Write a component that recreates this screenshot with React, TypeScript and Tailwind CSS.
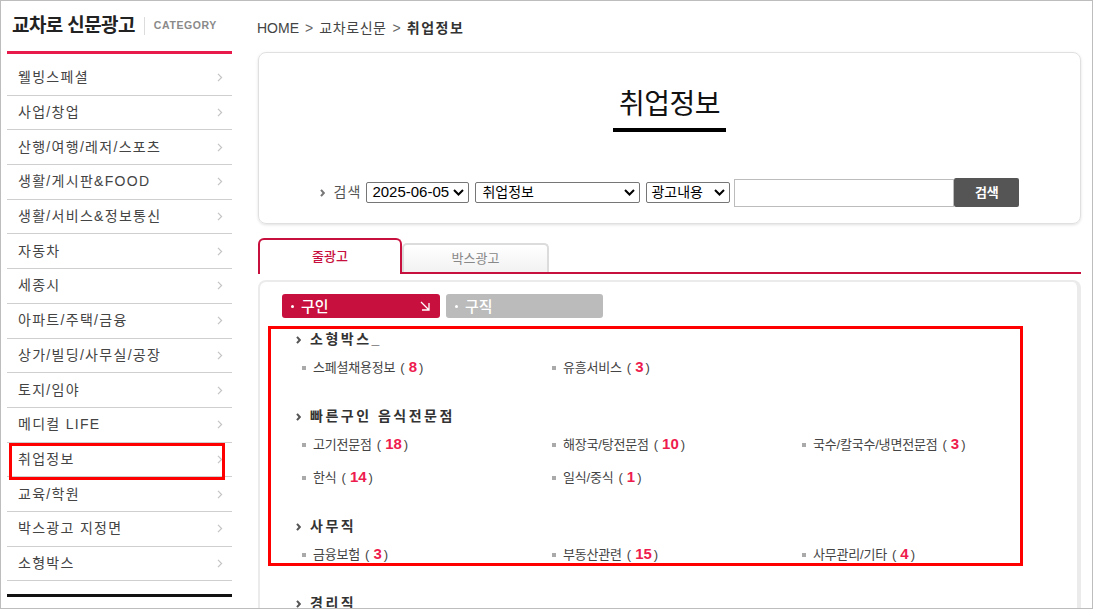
import React from "react";

const menu = [
  "웰빙스페셜",
  "사업/창업",
  "산행/여행/레저/스포츠",
  "생활/게시판&FOOD",
  "생활/서비스&정보통신",
  "자동차",
  "세종시",
  "아파트/주택/금융",
  "상가/빌딩/사무실/공장",
  "토지/임야",
  "메디컬 LIFE",
  "취업정보",
  "교육/학원",
  "박스광고 지정면",
  "소형박스",
];

const sections: { title: string; items: [string, number][] }[] = [
  { title: "소형박스_", items: [["스페셜채용정보", 8], ["유흥서비스", 3]] },
  {
    title: "빠른구인 음식전문점",
    items: [
      ["고기전문점", 18],
      ["해장국/탕전문점", 10],
      ["국수/칼국수/냉면전문점", 3],
      ["한식", 14],
      ["일식/중식", 1],
    ],
  },
  { title: "사무직", items: [["금융보험", 3], ["부동산관련", 15], ["사무관리/기타", 4]] },
  { title: "경리직", items: [] },
];

function SmallChev({ color = "#c4c4c4" }: { color?: string }) {
  return (
    <svg width="6" height="9" viewBox="0 0 6 9">
      <path d="M1 0.8 L4.6 4.5 L1 8.2" stroke={color} strokeWidth="1.2" fill="none" />
    </svg>
  );
}

function BoldChev({ color = "#666" }: { color?: string }) {
  return (
    <svg width="5" height="8" viewBox="0 0 5 8">
      <path d="M1 0.8 L3.8 4 L1 7.2" stroke={color} strokeWidth="2" fill="none" />
    </svg>
  );
}

function SelectChev() {
  return (
    <svg width="11" height="7" viewBox="0 0 11 7">
      <path d="M1 1 L5.5 5.5 L10 1" stroke="#000" strokeWidth="2" fill="none" />
    </svg>
  );
}

export default function App() {
  return (
    <div className="w-[1093px] h-[609px] border border-[#bdbdbd] overflow-hidden flex bg-white font-['Liberation_Sans','Noto_Sans_CJK_KR',sans-serif]">
      {/* Sidebar */}
      <aside className="ml-[6px] w-[225px] shrink-0 relative">
        <div className="h-[50px] flex items-center pl-[5px]">
          <span className="text-[19px] font-bold text-[#222] tracking-[-0.6px]">교차로 신문광고</span>
          <span className="ml-[9px] w-px h-[18px] bg-[#dcdcdc]" />
          <span className="ml-[9px] text-[10.5px] font-bold tracking-[0.6px] text-[#8a8a8a]">CATEGORY</span>
        </div>
        <div className="h-[3px] bg-[#e8194b]" />
        <ul className="mt-[7px]">
          {menu.map((m) => (
            <li
              key={m}
              className="h-[34.7px] border-b border-[#cfcfcf] flex items-center justify-between pl-[11px] pr-[9px] text-[14px] text-[#444] tracking-[1.3px]"
            >
              <span>{m}</span>
              <SmallChev />
            </li>
          ))}
        </ul>
        <div className="mt-[13px] h-[3px] bg-[#111]" />
        <div className="absolute left-[2px] top-[442px] w-[216px] h-[37px] border-[3px] border-[#ff0000]" />
      </aside>

      {/* Main */}
      <main className="ml-[26px] w-[823px] shrink-0 flex flex-col">
        <div className="mt-[17px] h-[20px] flex items-center text-[14px] text-[#444] -ml-px">
          <span>HOME</span>
          <span className="mx-[6px] text-[#666]">&gt;</span>
          <span className="tracking-[0.6px]">교차로신문</span>
          <span className="mx-[6px] text-[#666]">&gt;</span>
          <span className="font-bold text-[#333] tracking-[1.5px]">취업정보</span>
        </div>

        {/* Search panel */}
        <section className="mt-[14px] h-[172px] shrink-0 border border-[#e0e0e0] rounded-[8px] shadow-[0_1px_3px_rgba(0,0,0,0.12)] flex flex-col items-center">
          <h1 className="mt-[35px] text-[28px] leading-[34px] text-[#111] tracking-[-0.5px]">취업정보</h1>
          <div className="mt-[6px] w-[113px] h-[4px] bg-black" />
          <div className="mt-[46px] h-[29px] flex items-center">
            <BoldChev color="#777" />
            <span className="ml-[9px] text-[14px] text-[#555] tracking-[1px]">검색</span>
            <div className="ml-[5px] w-[103px] h-[21px] border border-[#767676] rounded-[2px] flex items-center justify-between pl-[5px] pr-[4px] text-[15px] text-black">
              <span>2025-06-05</span>
              <SelectChev />
            </div>
            <div className="ml-[6px] w-[165px] h-[21px] border border-[#767676] rounded-[2px] flex items-center justify-between pl-[6px] pr-[4px] text-[14px] text-black">
              <span>취업정보</span>
              <SelectChev />
            </div>
            <div className="ml-[6px] w-[84px] h-[21px] border border-[#767676] rounded-[2px] flex items-center justify-between pl-[4px] pr-[4px] text-[14px] text-black">
              <span>광고내용</span>
              <SelectChev />
            </div>
            <div className="ml-[4px] w-[220px] h-[28px] border border-[#bcbcbc] bg-white" />
            <button className="w-[65px] h-[29px] bg-[#555] text-white font-bold text-[13px] rounded-[2px]">검색</button>
          </div>
        </section>

        {/* Tabs */}
        <div className="mt-[14px] h-[36px] shrink-0 flex items-end">
          <div className="w-[144px] h-[36px] border-2 border-b-0 border-[#c8103e] rounded-t-[6px] bg-white flex items-center justify-center text-[13px] text-[#c8103e] font-medium">
            줄광고
          </div>
          <div className="flex-1 h-[31px] border-b-2 border-[#c8103e] flex items-end">
            <div className="w-[147px] h-[29px] border-2 border-b-0 border-[#dcdcdc] rounded-t-[5px] bg-gradient-to-b from-white to-[#f2f2f2] flex items-center justify-center text-[13px] text-[#888]">
              박스광고
            </div>
          </div>
        </div>

        {/* Content panel */}
        <div className="mt-[6px] flex-1 border-2 border-r-4 border-b-0 border-[#ebebeb] rounded-t-[8px] pl-[22px] pt-[12px] relative">
          <div className="flex gap-[6px]">
            <div className="w-[158px] h-[24px] rounded-[3px] bg-[#c8103e] text-white flex items-center pl-[9px] pr-[10px]">
              <span className="w-[3px] h-[3px] rounded-full bg-white" />
              <span className="ml-[7px] text-[15px] font-medium leading-none">구인</span>
              <svg className="ml-auto" width="10" height="10" viewBox="0 0 10 10">
                <path d="M1 1 L8.5 8.5 M9 2 L9 9 L2 9" stroke="#fff" strokeWidth="1.3" fill="none" />
              </svg>
            </div>
            <div className="w-[157px] h-[24px] rounded-[3px] bg-[#bbbbbb] text-white flex items-center pl-[9px]">
              <span className="w-[3px] h-[3px] rounded-full bg-white" />
              <span className="ml-[7px] text-[15px] font-medium leading-none">구직</span>
            </div>
          </div>

          <div className="mt-[10px] ml-[14px]">
            {sections.map((s) => (
              <div key={s.title} className="mb-[21px]">
                <div className="h-[23px] flex items-center">
                  <BoldChev color="#555" />
                  <span className="ml-[9px] text-[14px] font-bold text-[#333] tracking-[2.5px]">{s.title}</span>
                </div>
                <div className="ml-[6px] grid grid-cols-[250px_250px_250px]">
                  {s.items.map(([name, n]) => (
                    <div key={name} className="h-[33px] flex items-center">
                      <span className="w-[4px] h-[4px] bg-[#aaa]" />
                      <span className="ml-[7px] flex items-center text-[13px] text-[#444]">
                        <span className="tracking-[-0.2px]">{name}</span>
                        <span className="ml-[5px]">(</span>
                        <span className="ml-[4px] text-[15px] font-bold text-[#ee1c4e]">{n}</span>
                        <span className="ml-[2px]">)</span>
                      </span>
                    </div>
                  ))}
                </div>
              </div>
            ))}
          </div>

          <div className="absolute left-[8px] top-[44px] w-[755px] h-[240px] border-[3px] border-[#ff0000]" />
        </div>
      </main>
    </div>
  );
}
